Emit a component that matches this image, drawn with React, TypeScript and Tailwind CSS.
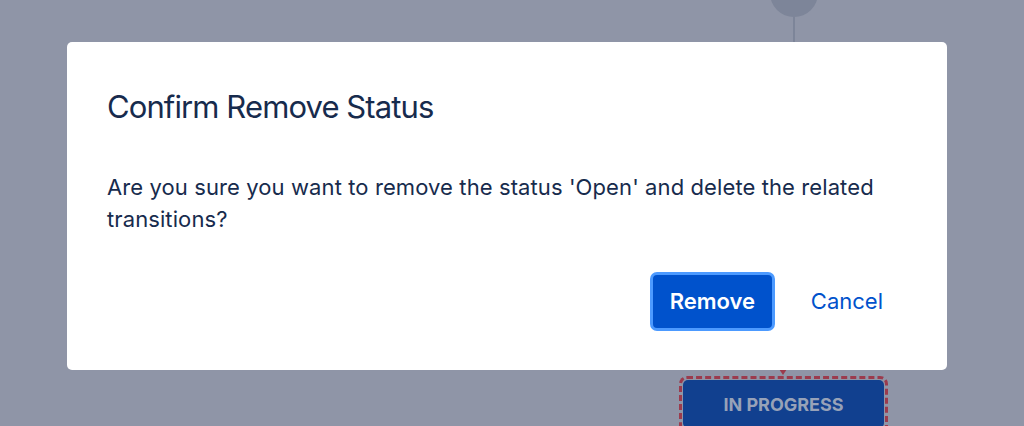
export default function App() {
  return (
    <div
      className="relative h-[426px] w-[1024px] overflow-hidden bg-[#8f95a7]"
      style={{ fontFamily: "Inter, 'Noto Sans', sans-serif" }}
    >
      {/* Workflow canvas behind the overlay */}
      <div className="absolute left-[770px] top-[-31px] h-[48px] w-[48px] rounded-full bg-[#7d8599]" />
      <div className="absolute left-[793px] top-[17px] h-[26px] w-[2px] bg-[#7d8599]" />
      <div className="absolute left-[779px] top-[369px] h-0 w-0 border-x-[4px] border-t-[6px] border-x-transparent border-t-[#9b3b4d]" />
      <div className="absolute left-[679px] top-[376px] h-[60px] w-[209px] rounded-[8px] border-[3px] border-dashed border-[#9b3b4d] p-[1px]">
        <div className="flex h-[48px] items-center justify-center rounded-[5px] bg-[#11408f] text-[18px] font-bold text-[#97a2b8]">
          IN PROGRESS
        </div>
      </div>

      {/* Modal */}
      <div className="relative pl-[67px] pt-[42px]">
        <div className="w-[880px] rounded-[5px] bg-white px-[40px] pb-[39px] pt-[45px] text-[#172b4d]">
          <h1 className="text-[31px] leading-[40px] font-normal tracking-[-0.9px]">
            Confirm Remove Status
          </h1>
          <p className="mt-[44px] text-[22px] leading-[32px] tracking-[0.1px]">
            Are you sure you want to remove the status 'Open' and delete the
            related transitions?
          </p>
          <div className="mt-[37px] flex items-center justify-end gap-[12px]">
            <button className="h-[59px] w-[125px] rounded-[7px] border-[3px] border-[#4c9aff] bg-[#0052cc] text-[22px] font-semibold text-white">
              Remove
            </button>
            <button className="h-[59px] px-[24px] text-[22px] text-[#0052cc]">
              Cancel
            </button>
          </div>
        </div>
      </div>
    </div>
  );
}
